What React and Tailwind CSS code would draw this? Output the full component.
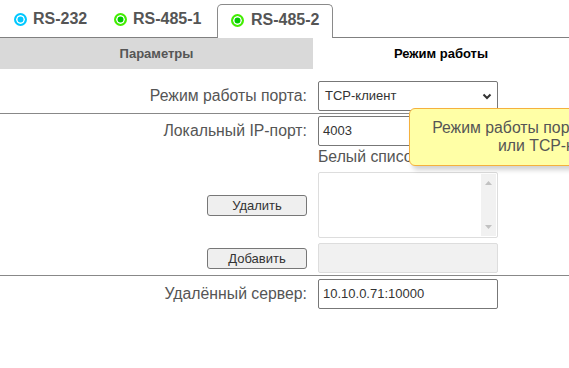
import React from "react";

const font = { fontFamily: "'Liberation Sans', Arial, sans-serif" };

function Dot({ color }) {
  const cls =
    color === "cyan"
      ? "border-[#00c8ff] bg-[#00c8ff]"
      : "border-[#44ee00] bg-[#00cc00]";
  return (
    <span
      className={`inline-block h-[13px] w-[13px] shrink-0 rounded-full border-2 shadow-[inset_0_0_0_1.5px_#fff] ${cls}`}
    />
  );
}

function Tab({ label, color, active, w }) {
  if (active) {
    return (
      <div className="relative -mb-px ml-[3px] flex h-[34px] w-[116px] items-center gap-[7px] rounded-t-[5px] border border-b-0 border-[#8a8a8a] bg-white pl-[13px] pb-[3px]">
        <Dot color={color} />
        <span className="text-[16px] font-bold text-[#555]">{label}</span>
      </div>
    );
  }
  return (
    <div className={`flex h-[33px] items-center gap-[6px] pl-[14px] pb-[3px] ${w}`}>
      <Dot color={color} />
      <span className="text-[16px] font-bold text-[#555]">{label}</span>
    </div>
  );
}

function Label({ children }) {
  return <div className="w-[307px] shrink-0 text-right text-[15.8px] text-[#555]">{children}</div>;
}

function Btn({ children }) {
  return (
    <button className="h-[21px] w-[100px] rounded-[3px] border border-[#777] bg-[#efefef] text-[13px] text-[#333]">
      {children}
    </button>
  );
}

export default function App() {
  return (
    <div className="relative h-[368px] w-[569px] overflow-hidden bg-white" style={font}>
      {/* port tabs */}
      <div className="flex h-[38px] items-end border-b border-[#808080]">
        <Tab label="RS-232" color="cyan" w="w-[100px]" />
        <Tab label="RS-485-1" color="green" w="w-[114px]" />
        <Tab label="RS-485-2" color="green" active />
      </div>

      {/* sub tabs */}
      <div className="flex h-[31px]">
        <div className="flex w-[313px] items-center justify-center bg-[#d9d9d9] text-[13px] font-bold text-[#555]">
          Параметры
        </div>
        <div className="flex flex-1 items-center justify-center text-[13px] font-bold text-black">
          Режим работы
        </div>
      </div>

      {/* mode */}
      <div className="flex h-[45px] items-start gap-[11px] border-b border-[#888] pt-[12px]">
        <div className="flex h-[30px] items-center">
          <Label>Режим работы порта:</Label>
        </div>
        <div className="flex h-[30px] w-[180px] items-center justify-between rounded-[2px] border border-[#777] px-[6px] text-[13px] text-[#333]">
          <span>TCP-клиент</span>
          <svg width="10" height="7" viewBox="0 0 10 7" className="mr-[-1px]">
            <path d="M1.5 1.5 L5 5 L8.5 1.5" fill="none" stroke="#333" strokeWidth="2" />
          </svg>
        </div>
      </div>

      {/* local port + whitelist */}
      <div className="flex flex-col border-b border-[#888] pb-[2px] pt-[2px]">
        <div className="flex items-center gap-[11px]">
          <Label>Локальный IP-порт:</Label>
          <div className="flex h-[30px] w-[180px] items-center rounded-[2px] border border-[#777] px-[4px] text-[13px] text-[#333]">
            4003
          </div>
        </div>
        <div className="mt-[1px] flex gap-[11px]">
          <div className="w-[307px] shrink-0" />
          <div className="text-[15.8px] leading-[20px] text-[#555]">Белый список IP-адресов</div>
        </div>
        <div className="mt-[5px] flex items-center gap-[11px]">
          <div className="flex w-[307px] shrink-0 justify-end">
            <Btn>Удалить</Btn>
          </div>
          <div className="flex h-[66px] w-[180px] rounded-[2px] border border-[#ddd] bg-white p-[1px]">
            <div className="flex-1" />
            <div className="flex w-[15px] flex-col items-center justify-between bg-[#f1f1f1] py-[7px]">
              <svg width="7" height="4" viewBox="0 0 7 4">
                <path d="M0 4 L3.5 0 L7 4 Z" fill="#c1c1c1" />
              </svg>
              <svg width="7" height="4" viewBox="0 0 7 4">
                <path d="M0 0 L3.5 4 L7 0 Z" fill="#c1c1c1" />
              </svg>
            </div>
          </div>
        </div>
        <div className="mt-[5px] flex items-center gap-[11px]">
          <div className="flex w-[307px] shrink-0 justify-end">
            <Btn>Добавить</Btn>
          </div>
          <div className="h-[30px] w-[180px] rounded-[2px] border border-[#ddd] bg-[#f1f1f1]" />
        </div>
      </div>

      {/* remote server */}
      <div className="flex items-center gap-[11px] pt-[3px]">
        <Label>Удалённый сервер:</Label>
        <div className="flex h-[30px] w-[180px] items-center rounded-[2px] border border-[#777] px-[4px] text-[13px] text-[#333]">
          10.10.0.71:10000
        </div>
      </div>

      {/* tooltip */}
      <div className="absolute left-[409px] top-[108px] flex h-[58px] w-[296px] flex-col items-center justify-center rounded-[6px] border border-[#f5b13d] bg-[#ffffa6] text-center text-[15.8px] leading-[18px] text-[#555] shadow-[3px_4px_5px_rgba(0,0,0,0.18)]">
        <span>Режим работы порта: TCP-сервер</span>
        <span>или TCP-клиент</span>
      </div>
    </div>
  );
}
